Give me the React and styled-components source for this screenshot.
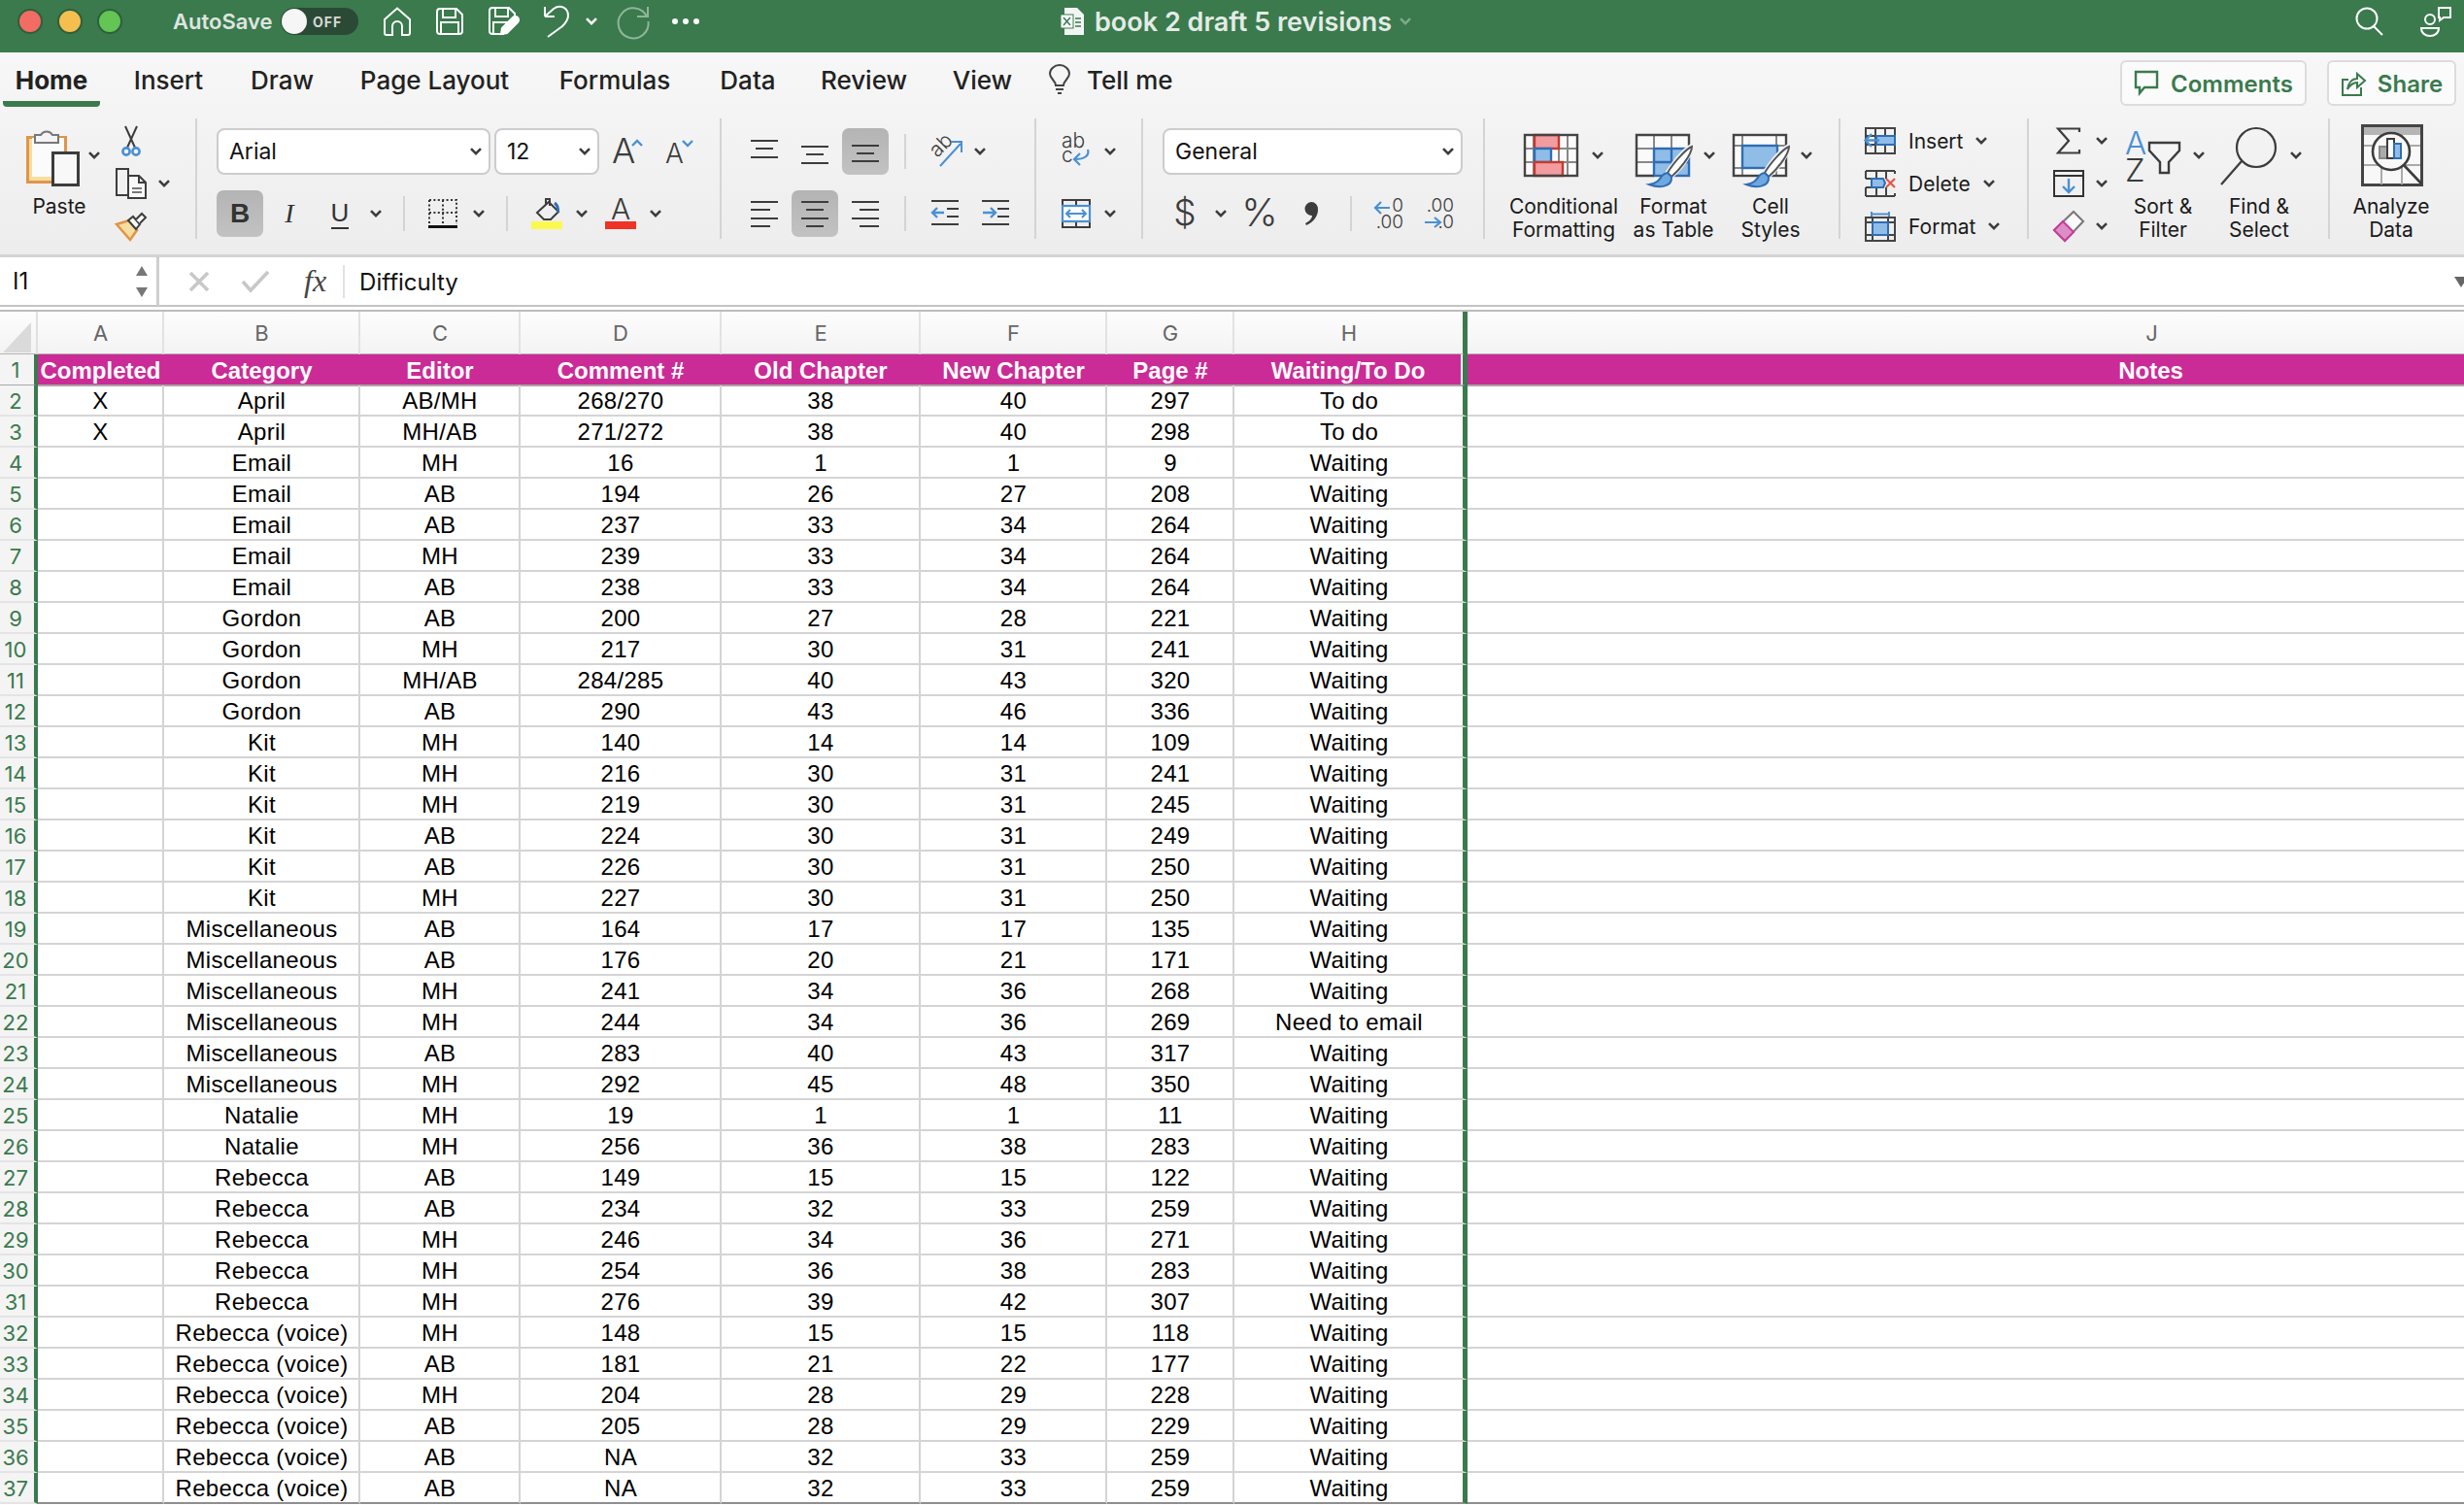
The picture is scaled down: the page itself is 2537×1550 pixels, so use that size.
import React from "react";
import styled, { createGlobalStyle } from "styled-components";

const COLUMNS = ["A", "B", "C", "D", "E", "F", "G", "H", "J"];
const HEADINGS = ["Completed", "Category", "Editor", "Comment #", "Old Chapter", "New Chapter", "Page #", "Waiting/To Do", "Notes"];

// one line per sheet row, starting at row 2
const SHEET = `X|April|AB/MH|268/270|38|40|297|To do
X|April|MH/AB|271/272|38|40|298|To do
|Email|MH|16|1|1|9|Waiting
|Email|AB|194|26|27|208|Waiting
|Email|AB|237|33|34|264|Waiting
|Email|MH|239|33|34|264|Waiting
|Email|AB|238|33|34|264|Waiting
|Gordon|AB|200|27|28|221|Waiting
|Gordon|MH|217|30|31|241|Waiting
|Gordon|MH/AB|284/285|40|43|320|Waiting
|Gordon|AB|290|43|46|336|Waiting
|Kit|MH|140|14|14|109|Waiting
|Kit|MH|216|30|31|241|Waiting
|Kit|MH|219|30|31|245|Waiting
|Kit|AB|224|30|31|249|Waiting
|Kit|AB|226|30|31|250|Waiting
|Kit|MH|227|30|31|250|Waiting
|Miscellaneous|AB|164|17|17|135|Waiting
|Miscellaneous|AB|176|20|21|171|Waiting
|Miscellaneous|MH|241|34|36|268|Waiting
|Miscellaneous|MH|244|34|36|269|Need to email
|Miscellaneous|AB|283|40|43|317|Waiting
|Miscellaneous|MH|292|45|48|350|Waiting
|Natalie|MH|19|1|1|11|Waiting
|Natalie|MH|256|36|38|283|Waiting
|Rebecca|AB|149|15|15|122|Waiting
|Rebecca|AB|234|32|33|259|Waiting
|Rebecca|MH|246|34|36|271|Waiting
|Rebecca|MH|254|36|38|283|Waiting
|Rebecca|MH|276|39|42|307|Waiting
|Rebecca (voice)|MH|148|15|15|118|Waiting
|Rebecca (voice)|AB|181|21|22|177|Waiting
|Rebecca (voice)|MH|204|28|29|228|Waiting
|Rebecca (voice)|AB|205|28|29|229|Waiting
|Rebecca (voice)|AB|NA|32|33|259|Waiting
|Rebecca (voice)|AB|NA|32|33|259|Waiting`
  .split("\n")
  .map((line) => line.split("|"));

const DARK = "#3c3c3c";
const BLUE = "#4a90d4";
const DEEP = "#2f6db5";
const PALE = "#90bde8";

const Chevron = ({ color = DARK }) => (
  <svg width="12" height="8" viewBox="0 0 12 8">
    <path d="M1 1.2 6 6.2 11 1.2" fill="none" stroke={color} strokeWidth="2.6" />
  </svg>
);

const Drop = ({ ml = 0, w = 20, color }) => (
  <Slot $w={w} $ml={ml}>
    <Chevron color={color} />
  </Slot>
);

const Home = () => (
  <svg width="28" height="30" viewBox="0 0 28 30" fill="none" stroke="#fff" strokeWidth="2">
    <path d="M1 13 14 1.5 27 13V27a2 2 0 0 1-2 2H19V20a5 5 0 0 0-10 0v9H3a2 2 0 0 1-2-2Z" />
  </svg>
);

const Save = () => (
  <svg width="28" height="28" viewBox="0 0 28 28" fill="none" stroke="#fff" strokeWidth="2">
    <path d="M4 1H21L27 7V24a3 3 0 0 1-3 3H4a3 3 0 0 1-3-3V4A3 3 0 0 1 4 1Z" />
    <path d="M7 1V10H20V1M5 27V15H23V27" />
  </svg>
);

const SaveAs = () => (
  <svg width="32" height="30" viewBox="0 0 32 30" fill="none" stroke="#fff" strokeWidth="2">
    <path d="M16 28H4a3 3 0 0 1-3-3V4A3 3 0 0 1 4 1H21L27 7V11" />
    <path d="M7 1V10H20V1M5 27V16H21" />
    <path d="M13 28 14 22 25 11a3 3 0 0 1 5 5L19 27Z" fill="#fff" />
  </svg>
);

const Undo = () => (
  <svg width="28" height="34" viewBox="0 0 28 34" fill="none" stroke="#fff" strokeWidth="2">
    <path d="M2 12V2M2 12H12M2 12 11 4C18-1 26 3 26 11 26 16 23 19 20 22L5 33" />
  </svg>
);

const Redo = () => (
  <svg width="34" height="34" viewBox="0 0 34 34" fill="none" stroke="#8fb59b" strokeWidth="2">
    <path d="M31 12A15.5 15.5 0 1 0 32.5 17M32 2V12H21" />
  </svg>
);

const DocBadge = () => (
  <svg width="26" height="30" viewBox="0 0 26 30">
    <path d="M5 1H18L25 8V29H5Z" fill="#f2f6f3" />
    <rect x="1" y="8" width="13" height="14" fill="#fff" stroke="#3a7a4d" />
    <path d="M4 11 11 19M11 11 4 19" stroke="#3a7a4d" strokeWidth="1.5" />
    <path d="M16 12h6M16 16h6M16 20h6" stroke="#3a7a4d" strokeWidth="1.5" />
  </svg>
);

const Search = () => (
  <svg width="30" height="30" viewBox="0 0 30 30" fill="none" stroke="#fff" strokeWidth="2">
    <circle cx="12" cy="12" r="10.5" />
    <path d="M19 20 28 29" />
  </svg>
);

const People = () => (
  <svg width="34" height="32" viewBox="0 0 34 32" fill="none" stroke="#fff" strokeWidth="2">
    <circle cx="11" cy="14" r="5" />
    <path d="M2 23H20C20 28 16 31 11 31S2 28 2 23Z" />
    <path d="M20 2H32V12H25L21 15V12H20Z" />
  </svg>
);

const Bulb = () => (
  <svg width="24" height="32" viewBox="0 0 24 32" fill="none" stroke="#444" strokeWidth="2">
    <path d="M8 22C8 17 2 15 2 10a10 9 0 0 1 20 0C22 15 16 17 16 22Z" />
    <path d="M8 26H16M10 30H14" />
  </svg>
);

const CommentIcon = () => (
  <svg width="26" height="28" viewBox="0 0 26 28" fill="none" stroke="#3a7a4d" strokeWidth="2.4">
    <path d="M2 2H24V18H11L6 24V18H2Z" />
  </svg>
);

const ShareIcon = () => (
  <svg width="26" height="28" viewBox="0 0 26 28" fill="none" stroke="#3a7a4d" strokeWidth="2">
    <path d="M8 10H2V26H21V18" />
    <path d="M7 20C8 13 12 9 17 9V4L25 11 17 18V13C13 13 10 15 7 20Z" />
  </svg>
);

const Paste = () => (
  <svg width="54" height="64" viewBox="0 0 54 64">
    <rect x="1.5" y="13.5" width="39" height="46" fill="#f7dd9f" stroke="#e0954a" strokeWidth="3" />
    <rect x="6" y="14" width="33" height="40" fill="#fbfbfb" />
    <path d="M9 19V11H15A7 7 0 0 1 27 11H33V19Z" fill="#f4f4f4" stroke="#777" strokeWidth="2" />
    <rect x="27.5" y="29.5" width="26" height="33" fill="#f8f8f8" stroke={DARK} strokeWidth="3" />
  </svg>
);

const Scissors = () => (
  <svg width="22" height="32" viewBox="0 0 22 32" fill="none">
    <path d="M5 1 15 23M17 1 7 23" stroke={DARK} strokeWidth="2" />
    <circle cx="6" cy="27" r="3.6" stroke={BLUE} strokeWidth="2.6" />
    <circle cx="16" cy="27" r="3.6" stroke={BLUE} strokeWidth="2.6" />
  </svg>
);

const Copy = () => (
  <svg width="32" height="32" viewBox="0 0 32 32" fill="none" stroke={DARK} strokeWidth="2">
    <path d="M13 7V1H8L1 1V28H12" />
    <path d="M13 8H24L31 15V31H13Z" fill="#f8f8f8" />
    <path d="M24 8V15H31" />
    <path d="M17 21H27M17 25H27" stroke="#777" />
  </svg>
);

const Painter = () => (
  <svg width="32" height="30" viewBox="0 0 32 30">
    <path d="M1 13 14 9 22 19 15 29Z" fill="#f7dd9f" stroke="#e0954a" strokeWidth="2.6" />
    <path d="M13 9 18 5 25 13 21 18Z" fill="#fafafa" stroke={DARK} strokeWidth="2" />
    <path d="M21 8 27 2 31 6 25 12" fill="#fafafa" stroke={DARK} strokeWidth="2" />
  </svg>
);

const Borders = () => (
  <svg width="30" height="30" viewBox="0 0 30 30" fill="none">
    <path d="M1 1H29V26M1 1V26M15 1V26M1 14H29" stroke="#333" strokeWidth="2" strokeDasharray="2 2.4" />
    <path d="M0 28.5H30" stroke="#111" strokeWidth="3" />
  </svg>
);

const FillColor = () => (
  <svg width="32" height="32" viewBox="0 0 32 32">
    <path d="M6 15 18 4 28 14 20 22H13Z" fill="none" stroke={DARK} strokeWidth="2" />
    <path d="M15 7V1H19V8" fill="none" stroke={DARK} strokeWidth="2" />
    <path d="M24 5C27 7 28 10 27.5 15" fill="none" stroke={DEEP} strokeWidth="3" />
    <rect y="24" width="32" height="8" fill="#fbf94f" />
  </svg>
);

const FontColor = () => (
  <svg width="32" height="32" viewBox="0 0 32 32">
    <text x="16" y="22" textAnchor="middle" fontSize="30" fontWeight="300" fontFamily="Inter" fill={DARK}>A</text>
    <rect y="24" width="32" height="8" fill="#ee3424" />
  </svg>
);

const GrowFont = () => (
  <svg width="32" height="30" viewBox="0 0 32 30" fill="none">
    <text x="0" y="27" fontSize="36" fontWeight="300" fontFamily="Inter" fill={DARK}>A</text>
    <path d="M21 9 26 4 31 9" stroke={BLUE} strokeWidth="2.4" />
  </svg>
);

const ShrinkFont = () => (
  <svg width="28" height="30" viewBox="0 0 28 30" fill="none">
    <text x="0" y="27" fontSize="28" fontWeight="300" fontFamily="Inter" fill={DARK}>A</text>
    <path d="M18 4 23 9 28 4" stroke={BLUE} strokeWidth="2.4" />
  </svg>
);

const Lines = ({ rows, width = 28 }) => (
  <svg width={width} height="30" viewBox={`0 0 ${width} 30`} fill="none" stroke={DARK} strokeWidth="2">
    <path d={rows.map(([x, w, y]) => `M${x} ${y}h${w}`).join("")} />
  </svg>
);

const Orientation = () => (
  <svg width="34" height="32" viewBox="0 0 34 32" fill="none">
    <text transform="translate(8 23) rotate(-45)" fontSize="21" fontFamily="Inter" fontWeight="300" fill={DARK}>ab</text>
    <path d="M11 31 32 8M22 6H33V17" stroke={BLUE} strokeWidth="2" />
  </svg>
);

const Wrap = () => (
  <svg width="30" height="32" viewBox="0 0 30 32" fill="none">
    <text x="0" y="12" fontSize="21" fontFamily="Inter" fontWeight="300" fill={DARK}>ab</text>
    <text x="0" y="27" fontSize="21" fontFamily="Inter" fontWeight="300" fill={DARK}>c</text>
    <path d="M27 14C29 20 24 24 14 24M19 18 13 24 19 30" stroke={BLUE} strokeWidth="2.2" />
  </svg>
);

const Merge = () => (
  <svg width="30" height="30" viewBox="0 0 30 30" fill="none">
    <path d="M1 1H29V29H1ZM15 1V7M15 23V29" stroke={DARK} strokeWidth="2" />
    <rect x="1" y="7" width="28" height="16" fill="#fbfbfb" stroke={BLUE} strokeWidth="2.2" />
    <path d="M5 15H25M9 11 5 15 9 19M21 11 25 15 21 19" stroke={BLUE} strokeWidth="2" />
  </svg>
);

const Indent = ({ flip }) => (
  <svg width="28" height="30" viewBox="0 0 28 30" fill="none">
    <path d="M0 2H28M16 10H28M16 18H28M0 26H28" stroke={DARK} strokeWidth="2" />
    <path d={flip ? "M1 14H13M9 9 14 14 9 19" : "M1 14H13M6 9 1 14 6 19"} stroke={BLUE} strokeWidth="2.4" />
  </svg>
);

const Dollar = () => (
  <svg width="20" height="34" viewBox="0 0 20 34">
    <text x="10" y="29" textAnchor="middle" fontSize="37" fontWeight="300" fontFamily="Inter" fill={DARK}>$</text>
  </svg>
);

const Percent = () => (
  <svg width="32" height="32" viewBox="0 0 32 32">
    <text x="16" y="29" textAnchor="middle" fontSize="40" fontWeight="300" fontFamily="Inter" fill={DARK}>%</text>
  </svg>
);

const Comma = () => (
  <svg width="16" height="26" viewBox="0 0 16 26">
    <path d="M8 1A7 7 0 0 1 15 9C15 16 10 22 3 25L2 23C6 21 9 18 9 15A7 7 0 1 1 8 1Z" fill={DARK} />
  </svg>
);

const Decimal = ({ more }) => (
  <svg width="32" height="32" viewBox="0 0 32 32" fill="none">
    <text x="31" y="14" textAnchor="end" fontSize="19" fontWeight="300" fontFamily="Inter" fill={DARK}>{more ? ".00" : "0"}</text>
    <text x="31" y="31" textAnchor="end" fontSize="19" fontWeight="300" fontFamily="Inter" fill={DARK}>{more ? ".0" : ".00"}</text>
    <path
      d={more ? "M1 25H16M11 20 17 25 11 30" : "M2 10H17M8 4 2 10 8 16"}
      stroke={BLUE}
      strokeWidth="2.2"
    />
  </svg>
);

const Brush = () => (
  <g>
    <path d="M58 20C50 22 36 40 30 50L36 57C46 50 60 32 60 22Z" fill="#f4f4f4" />
    <path d="M58 23C52 25 38 41 33 50L37 54C44 48 58 32 58 23Z" fill="#fff" stroke="#555" strokeWidth="2" />
    <path d="M33 50C24 51 28 60 14 62 24 66 38 65 37 54Z" fill="#6fa8e0" stroke={DEEP} strokeWidth="2" />
  </g>
);

const Conditional = () => (
  <svg width="56" height="64" viewBox="0 0 56 64" fill="none">
    <rect x="1" y="11" width="54" height="42" fill="#fafafa" />
    <path d="M10 11V53M27 11V53M36 11V53M45 11V53M1 25H55M1 39H55" stroke="#888" strokeWidth="2" />
    <rect x="11" y="11" width="25" height="14" fill="#f29ca0" stroke="#c43a2e" strokeWidth="2.4" />
    <rect x="11" y="25" width="17" height="14" fill={PALE} stroke={DEEP} strokeWidth="2.4" />
    <rect x="11" y="39" width="29" height="14" fill="#f29ca0" stroke="#c43a2e" strokeWidth="2.4" />
    <rect x="1" y="11" width="54" height="42" stroke="#444" strokeWidth="2.4" />
  </svg>
);

const TableStyle = () => (
  <svg width="60" height="64" viewBox="0 0 60 64" fill="none">
    <rect x="1" y="11" width="54" height="42" fill="#fafafa" />
    <path d="M19 11V53M37 11V53M1 25H55M1 39H55" stroke="#888" strokeWidth="2" />
    <rect x="19" y="25" width="36" height="28" fill={PALE} stroke={DEEP} strokeWidth="2.4" />
    <path d="M37 25V53M19 39H55" stroke={DEEP} strokeWidth="2.4" />
    <path d="M19 53H1V11H55V25" stroke="#444" strokeWidth="2.4" />
    <Brush />
  </svg>
);

const CellStyle = () => (
  <svg width="60" height="64" viewBox="0 0 60 64" fill="none">
    <rect x="1" y="11" width="54" height="42" fill="#fafafa" />
    <path d="M10 11V53M45 11V53M1 22H55M1 45H55" stroke="#888" strokeWidth="2" />
    <rect x="10" y="22" width="36" height="23" fill={PALE} stroke={DEEP} strokeWidth="2.4" />
    <rect x="1" y="11" width="54" height="42" stroke="#444" strokeWidth="2.4" />
    <Brush />
  </svg>
);

const InsertCells = () => (
  <svg width="32" height="28" viewBox="0 0 32 28" fill="none">
    <path d="M1 1H31V27H1ZM1 9H31M1 18H31M11 1V27M21 1V27" stroke="#444" strokeWidth="2" />
    <rect x="12" y="9" width="19" height="9" fill={PALE} stroke={DEEP} strokeWidth="2" />
    <path d="M1 13.5H15M7 7 0.5 13.5 7 20" stroke={BLUE} strokeWidth="2.4" />
  </svg>
);

const DeleteCells = () => (
  <svg width="32" height="28" viewBox="0 0 32 28" fill="none">
    <path d="M1 1H31M1 27H31M1 1V9M1 18V27M12 1V9M12 18V27M22 1V9M22 18V27M31 1V4M31 24V27M1 9H12M1 18H12" stroke="#444" strokeWidth="2" />
    <path d="M7 9H19L21 13.5 19 18H7Z" fill={PALE} stroke={DEEP} strokeWidth="2" />
    <path d="M22 9 31 18M31 9 22 18" stroke="#e4574a" strokeWidth="2.2" />
  </svg>
);

const FormatCells = () => (
  <svg width="32" height="32" viewBox="0 0 32 32" fill="none">
    <path d="M7 1V6M25 1V6M7 3.5H25" stroke={BLUE} strokeWidth="2" />
    <path d="M1 7H31V31H1ZM8 7V31M24 7V31M1 12H31M1 25H31" stroke="#444" strokeWidth="2" />
    <rect x="8" y="12" width="16" height="13" fill={PALE} stroke={DEEP} strokeWidth="2" />
  </svg>
);

const Sigma = () => (
  <svg width="26" height="28" viewBox="0 0 26 28" fill="none" stroke={DARK} strokeWidth="2.2">
    <path d="M24 5V1.5H2L13 14 2 26.5H24V23" />
  </svg>
);

const FillDown = () => (
  <svg width="32" height="28" viewBox="0 0 32 28" fill="none">
    <rect x="1" y="1" width="30" height="26" stroke="#333" strokeWidth="2" />
    <path d="M1 6H31" stroke="#333" strokeWidth="2" />
    <path d="M16 9V23M10 17 16 23 22 17" stroke={BLUE} strokeWidth="2.4" />
  </svg>
);

const Eraser = () => (
  <svg width="32" height="32" viewBox="0 0 32 32" fill="none">
    <path d="M21 1 31 11 12 31 1 20Z" fill="#fafafa" stroke="#777" strokeWidth="2" />
    <path d="M10 11 21 22 12 31 1 20Z" fill="#dc8fc4" stroke="#c93a9c" strokeWidth="2" />
  </svg>
);

const SortFilter = () => (
  <svg width="58" height="64" viewBox="0 0 58 64" fill="none">
    <text x="0" y="31" fontSize="33" fontWeight="300" fontFamily="Inter" fill={BLUE}>A</text>
    <text x="0" y="59" fontSize="33" fontWeight="300" fontFamily="Inter" fill={DARK}>Z</text>
    <path d="M25 19H56V27L45 39V50H36V39L25 27Z" fill="#f4f4f4" stroke={DARK} strokeWidth="2.4" />
  </svg>
);

const FindSelect = () => (
  <svg width="62" height="64" viewBox="0 0 62 64" fill="none" stroke={DARK} strokeWidth="2.2">
    <circle cx="37" cy="24" r="20" />
    <path d="M22 38 1 62" />
  </svg>
);

const Analyze = () => (
  <svg width="64" height="64" viewBox="0 0 64 64" fill="none">
    <rect x="1.5" y="1.5" width="61" height="61" fill="#f8f8f8" stroke="#444" strokeWidth="3" />
    <rect x="3" y="3" width="58" height="8" fill="#b5b5b5" />
    <path d="M3 22H61M3 42H61M21 11V62M42 11V62" stroke="#aaa" strokeWidth="2" />
    <circle cx="31" cy="28" r="19" fill="#f8f8f8" stroke={DARK} strokeWidth="2.6" />
    <rect x="19" y="23" width="9" height="12" fill="#aaa" stroke="#888" strokeWidth="2" />
    <rect x="27" y="15" width="7" height="20" fill="#fff" stroke={DARK} strokeWidth="2" />
    <rect x="34" y="20" width="7" height="15" fill={PALE} stroke={DEEP} strokeWidth="2" />
    <path d="M44 42 62 61" stroke={DARK} strokeWidth="2.6" />
  </svg>
);

const Cancel = () => (
  <svg width="22" height="22" viewBox="0 0 22 22" fill="none" stroke="#c8c8c8" strokeWidth="3.6">
    <path d="M2 2 20 20M20 2 2 20" />
  </svg>
);

const Confirm = () => (
  <svg width="30" height="24" viewBox="0 0 30 24" fill="none" stroke="#c8c8c8" strokeWidth="3.6">
    <path d="M2 12 10 21 28 2" />
  </svg>
);

const Corner = () => (
  <svg width="30" height="32" viewBox="0 0 30 32">
    <path d="M29 0V31H0Z" fill="#dadada" />
  </svg>
);

const LabelTool = ({ w, pad, label, icon, ml = 0, drop = 10 }) => (
  <BigTool $w={w} $ml={ml}>
    <IconRow $pad={pad}>
      {icon}
      {drop !== null && <Drop ml={drop} />}
    </IconRow>
    <ToolLabel>{label}</ToolLabel>
  </BigTool>
);

const FontRows = () => (
  <Group $w={540} $pad={20} $top={10}>
    <ToolRow>
      <Select $w={282}>
        <span>Arial</span>
        <Chevron />
      </Select>
      <Select $w={108} $ml={4}>
        <span>12</span>
        <Chevron />
      </Select>
      <Slot $w={32} $ml={13}><GrowFont /></Slot>
      <Slot $w={28} $ml={23}><ShrinkFont /></Slot>
    </ToolRow>
    <ToolRow $gap={16}>
      <Slot $w={48} $on><BoldMark>B</BoldMark></Slot>
      <Slot $w={48} $ml={3}><ItalicMark>I</ItalicMark></Slot>
      <Slot $w={48} $ml={4}><UnderMark>U</UnderMark></Slot>
      <Drop ml={3} />
      <Rule $ml={18} />
      <Slot $w={30} $ml={24}><Borders /></Slot>
      <Drop ml={12} />
      <Rule $ml={18} />
      <Slot $w={32} $ml={24}><FillColor /></Slot>
      <Drop ml={10} />
      <Slot $w={32} $ml={14}><FontColor /></Slot>
      <Drop ml={10} />
    </ToolRow>
  </Group>
);

const AlignRows = () => (
  <Group $w={324} $pad={20} $top={10}>
    <ToolRow>
      <Slot $w={48}><Lines rows={[[0, 28, 4], [5, 18, 12], [0, 28, 21]]} /></Slot>
      <Slot $w={48} $ml={4}><Lines rows={[[0, 28, 10], [5, 18, 18], [0, 28, 27]]} /></Slot>
      <Slot $w={48} $ml={4} $on><Lines rows={[[0, 28, 9], [5, 18, 17], [0, 28, 25]]} /></Slot>
      <Rule $ml={16} />
      <Slot $w={34} $ml={24}><Orientation /></Slot>
      <Drop ml={8} />
    </ToolRow>
    <ToolRow $gap={16}>
      <Slot $w={48}><Lines rows={[[0, 28, 3], [0, 20, 11], [0, 28, 20], [0, 20, 28]]} /></Slot>
      <Slot $w={48} $ml={4} $on><Lines rows={[[0, 28, 3], [5, 18, 11], [0, 28, 20], [5, 18, 28]]} /></Slot>
      <Slot $w={48} $ml={4}><Lines rows={[[0, 28, 3], [8, 20, 11], [0, 28, 20], [8, 20, 28]]} /></Slot>
      <Rule $ml={16} />
      <Slot $w={28} $ml={26}><Indent /></Slot>
      <Slot $w={28} $ml={24}><Indent flip /></Slot>
    </ToolRow>
  </Group>
);

const WrapRows = () => (
  <Group $w={110} $pad={24} $top={10}>
    <ToolRow>
      <Slot $w={34}><Wrap /></Slot>
      <Drop ml={8} />
    </ToolRow>
    <ToolRow $gap={16}>
      <Slot $w={34}><Merge /></Slot>
      <Drop ml={8} />
    </ToolRow>
  </Group>
);

const NumberRows = () => (
  <Group $w={352} $pad={20} $top={10}>
    <ToolRow>
      <Select $w={309}>
        <span>General</span>
        <Chevron />
      </Select>
    </ToolRow>
    <ToolRow $gap={16}>
      <Slot $w={20} $ml={13}><Dollar /></Slot>
      <Drop ml={17} />
      <Slot $w={32} $ml={14}><Percent /></Slot>
      <Slot $w={20} $ml={27}><Comma /></Slot>
      <Rule $ml={30} />
      <Slot $w={32} $ml={22}><Decimal /></Slot>
      <Slot $w={32} $ml={20}><Decimal more /></Slot>
    </ToolRow>
  </Group>
);

export default function App() {
  return (
    <Page>
      <GlobalStyle />
      <TitleBar>
        <Lights>
          <Light $c="#f26c63" />
          <Light $c="#f5bf4f" />
          <Light $c="#62c554" />
        </Lights>
        <AutoSave>AutoSave</AutoSave>
        <Toggle>
          <Knob />
          <ToggleText>OFF</ToggleText>
        </Toggle>
        <Slot $w={28} $ml={26}><Home /></Slot>
        <Slot $w={28} $ml={26}><Save /></Slot>
        <Slot $w={32} $ml={26}><SaveAs /></Slot>
        <Slot $w={28} $ml={24}><Undo /></Slot>
        <Drop ml={12} color="#fff" />
        <Slot $w={34} $ml={16}><Redo /></Slot>
        <Dots $ml={23}>
          <i />
          <i />
          <i />
        </Dots>
        <Slot $w={26} $ml={371}><DocBadge /></Slot>
        <DocTitle>book 2 draft 5 revisions</DocTitle>
        <Drop ml={4} color="#7fa98b" />
        <BarEnd>
          <Search />
          <People />
        </BarEnd>
      </TitleBar>

      <Ribbon>
        <TabBar>
          <Tab $w={100} $active>Home</Tab>
          <Tab $w={141}>Insert</Tab>
          <Tab $w={93}>Draw</Tab>
          <Tab $w={221}>Page Layout</Tab>
          <Tab $w={150}>Formulas</Tab>
          <Tab $w={124}>Data</Tab>
          <Tab $w={115}>Review</Tab>
          <Tab $w={129}>View</Tab>
          <TellMe>
            <Bulb />
            Tell me
          </TellMe>
          <TabActions>
            <OutlineButton $w={192}>
              <CommentIcon />
              <ButtonText>Comments</ButtonText>
            </OutlineButton>
            <OutlineButton $w={133}>
              <ShareIcon />
              <ButtonText>Share</ButtonText>
            </OutlineButton>
          </TabActions>
        </TabBar>
        <Tools>
          <Group $w={203}>
            <LabelTool w={122} pad={27} label="Paste" icon={<Paste />} drop={6} />
            <Stack $ml={-3}>
              <StackRow><Slot $w={32}><Scissors /></Slot></StackRow>
              <StackRow><Slot $w={32}><Copy /></Slot><Drop ml={8} /></StackRow>
              <StackRow><Slot $w={32}><Painter /></Slot></StackRow>
            </Stack>
          </Group>
          <FontRows />
          <AlignRows />
          <WrapRows />
          <NumberRows />
          <Group $w={366} $pad={24}>
            <LabelTool w={114} pad={16} icon={<Conditional />} label={<>Conditional<br />Formatting</>} />
            <LabelTool w={112} pad={17} drop={6} icon={<TableStyle />} label={<>Format<br />as Table</>} />
            <LabelTool w={88} pad={5} drop={6} icon={<CellStyle />} label={<>Cell<br />Styles</>} />
          </Group>
          <Group $w={194} $pad={25}>
            <Stack>
              <StackRow><InsertCells /><CellLabel>Insert</CellLabel><Drop ml={9} /></StackRow>
              <StackRow><DeleteCells /><CellLabel>Delete</CellLabel><Drop ml={9} /></StackRow>
              <StackRow><FormatCells /><CellLabel>Format</CellLabel><Drop ml={9} /></StackRow>
            </Stack>
          </Group>
          <Group $w={310} $pad={25}>
            <Stack>
              <StackRow><Slot $w={32}><Sigma /></Slot><Drop ml={8} /></StackRow>
              <StackRow><Slot $w={32}><FillDown /></Slot><Drop ml={8} /></StackRow>
              <StackRow><Slot $w={32}><Eraser /></Slot><Drop ml={8} /></StackRow>
            </Stack>
            <LabelTool ml={6} w={94} pad={8} drop={8} icon={<SortFilter />} label={<>Sort &amp;<br />Filter</>} />
            <LabelTool ml={4} w={96} pad={8} drop={6} icon={<FindSelect />} label={<>Find &amp;<br />Select</>} />
          </Group>
          <Group $w={138} $last>
            <LabelTool w={126} pad={32} drop={null} icon={<Analyze />} label={<>Analyze<br />Data</>} />
          </Group>
        </Tools>
      </Ribbon>

      <FormulaBar>
        <NameBox>
          <span>I1</span>
          <Spinner>
            <Tri />
            <Tri $down />
          </Spinner>
        </NameBox>
        <Slot $w={22} $ml={30}><Cancel /></Slot>
        <Slot $w={30} $ml={32}><Confirm /></Slot>
        <FxMark>fx</FxMark>
        <FxRule />
        <FormulaText>Difficulty</FormulaText>
        <ExpandTri />
      </FormulaBar>

      <Sheet>
        <ColumnRow>
          <CornerCell><Corner /></CornerCell>
          {COLUMNS.map((c, i) => (
            <ColumnCell key={c} $last={i === 8}>{c}</ColumnCell>
          ))}
        </ColumnRow>
        <TitleRow>
          <RowNumber>1</RowNumber>
          {HEADINGS.map((h, i) => (
            <TitleCell key={h} $gap={i === 7}>{h}</TitleCell>
          ))}
        </TitleRow>
        {SHEET.map((cells, r) => (
          <DataRow key={r}>
            <RowNumber>{r + 2}</RowNumber>
            {cells.map((v, i) => (
              <Cell key={i} $gap={i === 7}>{v}</Cell>
            ))}
            <Cell $end />
          </DataRow>
        ))}
      </Sheet>
    </Page>
  );
}

const GlobalStyle = createGlobalStyle`
  html, body {
    margin: 0;
    height: 100%;
    overflow: hidden;
    background: #fff;
  }
  * {
    box-sizing: border-box;
  }
  svg {
    display: block;
    flex: none;
    overflow: visible;
  }
`;

const Page = styled.div`
  width: 2537px;
  height: 1550px;
  overflow: hidden;
  font-family: Inter, "Liberation Sans", sans-serif;
  color: #111;
`;

const Slot = styled.span`
  display: inline-flex;
  flex: none;
  align-items: center;
  justify-content: center;
  width: ${(p) => p.$w}px;
  height: ${(p) => (p.$on ? "48px" : "auto")};
  margin-left: ${(p) => p.$ml || 0}px;
  border-radius: 7px;
  background: ${(p) => (p.$on ? "linear-gradient(#b4b4b4, #c2c2c2)" : "none")};
`;

const TitleBar = styled.header`
  display: flex;
  align-items: center;
  height: 54px;
  padding-bottom: 10px;
  background: #3a7a4d;
`;

const Lights = styled.div`
  display: flex;
  gap: 15px;
  margin-left: 18px;
`;

const Light = styled.span`
  width: 26px;
  height: 26px;
  border-radius: 50%;
  background: ${(p) => p.$c};
  border: 2px solid #2f5f3e;
`;

const AutoSave = styled.span`
  flex: none;
  width: 101px;
  margin-left: 52px;
  white-space: nowrap;
  font-size: 22px;
  font-weight: 600;
  color: #dfe5e0;
`;

const Toggle = styled.span`
  display: flex;
  align-items: center;
  flex: none;
  width: 80px;
  height: 28px;
  margin-left: 10px;
  border-radius: 14px;
  background: #2b4a36;
`;

const Knob = styled.span`
  width: 26px;
  height: 26px;
  margin-left: 1px;
  border-radius: 50%;
  background: #f6f6f6;
`;

const ToggleText = styled.span`
  margin-left: 6px;
  font-size: 14px;
  font-weight: 700;
  letter-spacing: 1px;
  color: #d8d8d8;
`;

const Dots = styled.span`
  display: flex;
  gap: 5px;
  margin-left: ${(p) => p.$ml}px;
  i {
    width: 6px;
    height: 6px;
    border-radius: 50%;
    background: #fff;
  }
`;

const DocTitle = styled.span`
  margin-left: 10px;
  white-space: nowrap;
  font-size: 27px;
  font-weight: 600;
  color: #e4ebe6;
`;

const BarEnd = styled.div`
  display: flex;
  align-items: center;
  gap: 36px;
  margin-left: auto;
  padding-right: 12px;
`;

const Ribbon = styled.section`
  height: 211px;
  background: linear-gradient(#f7f7f7, #ededed);
  border-bottom: 3px solid #d4d4d4;
`;

const TabBar = styled.nav`
  display: flex;
  align-items: flex-start;
  height: 68px;
  padding-left: 3px;
`;

const Tab = styled.span`
  display: flex;
  align-items: center;
  justify-content: center;
  flex: none;
  width: ${(p) => p.$w}px;
  height: 56px;
  padding-top: 6px;
  font-size: 26px;
  font-weight: ${(p) => (p.$active ? 700 : 500)};
  color: #222;
  border-bottom: 6px solid ${(p) => (p.$active ? "#3a7a4d" : "transparent")};
  border-radius: 0 0 4px 4px;
`;

const TellMe = styled(Tab)`
  width: auto;
  gap: 16px;
  margin-left: 3px;
`;

const TabActions = styled.div`
  display: flex;
  gap: 21px;
  margin-left: auto;
  margin-top: 8px;
  padding-right: 8px;
`;

const OutlineButton = styled.span`
  display: flex;
  align-items: center;
  justify-content: center;
  gap: 12px;
  width: ${(p) => p.$w}px;
  height: 47px;
  border: 2px solid #dcdcdc;
  border-radius: 6px;
  background: #fbfbfb;
  font-size: 24px;
  font-weight: 600;
  color: #3a7a4d;
`;

const ButtonText = styled.span`
  padding-top: 2px;
`;

const Tools = styled.div`
  display: flex;
`;

const Group = styled.div`
  display: ${(p) => (p.$top ? "block" : "flex")};
  flex: none;
  width: ${(p) => p.$w}px;
  height: 124px;
  padding-left: ${(p) => p.$pad || 0}px;
  padding-top: ${(p) => p.$top || 0}px;
  border-right: ${(p) => (p.$last ? "none" : "2px solid #d4d4d4")};
`;

const ToolRow = styled.div`
  display: flex;
  align-items: center;
  height: 48px;
  margin-top: ${(p) => p.$gap || 0}px;
`;

const BigTool = styled.div`
  display: flex;
  flex-direction: column;
  flex: none;
  width: ${(p) => p.$w}px;
  margin-left: ${(p) => p.$ml}px;
`;

const IconRow = styled.div`
  display: flex;
  align-items: center;
  flex: none;
  height: 76px;
  padding-left: ${(p) => p.$pad}px;
`;

const ToolLabel = styled.div`
  flex: none;
  margin-top: 3px;
  text-align: center;
  white-space: nowrap;
  font-size: 21px;
  line-height: 24px;
  color: #1a1a1a;
`;

const Stack = styled.div`
  display: flex;
  flex-direction: column;
  flex: none;
  padding-top: 1px;
  margin-left: ${(p) => p.$ml || 0}px;
`;

const StackRow = styled.div`
  display: flex;
  align-items: center;
  flex: none;
  height: 44px;
`;

const CellLabel = styled.span`
  margin-left: 13px;
  font-size: 21px;
  color: #1a1a1a;
`;

const Select = styled.div`
  display: flex;
  align-items: center;
  justify-content: space-between;
  flex: none;
  width: ${(p) => p.$w}px;
  height: 48px;
  margin-left: ${(p) => p.$ml || 0}px;
  padding: 0 7px 0 11px;
  border: 2px solid #cccccc;
  border-radius: 8px;
  background: #fff;
  font-size: 23px;
  color: #111;
`;

const Rule = styled.span`
  flex: none;
  width: 2px;
  height: 36px;
  margin-left: ${(p) => p.$ml}px;
  background: #d4d4d4;
`;

const BoldMark = styled.span`
  font: 700 28px "Liberation Sans", sans-serif;
  color: #333;
`;

const ItalicMark = styled.span`
  font: italic 400 28px "Liberation Serif", serif;
  color: #333;
`;

const UnderMark = styled.span`
  font: 400 26px "Liberation Sans", sans-serif;
  color: #333;
  padding-bottom: 1px;
  border-bottom: 2px solid #333;
  line-height: 28px;
`;

const FormulaBar = styled.div`
  display: flex;
  align-items: center;
  position: relative;
  height: 56px;
  padding-bottom: 5px;
  background: #fff;
  border-bottom: 2px solid #bdbdbd;
  box-shadow: inset 0 -3px 0 #fff, inset 0 -5px 0 #c4c4c4;
`;

const NameBox = styled.div`
  display: flex;
  align-items: center;
  justify-content: space-between;
  flex: none;
  width: 164px;
  height: 51px;
  padding: 0 9px 0 13px;
  border-right: 3px solid #cfcfcf;
  font-size: 24px;
`;

const Spinner = styled.span`
  display: flex;
  flex-direction: column;
  gap: 12px;
`;

const Tri = styled.i`
  width: 0;
  height: 0;
  border-left: 6px solid transparent;
  border-right: 6px solid transparent;
  ${(p) => (p.$down ? "border-top" : "border-bottom")}: 10px solid #777;
`;

const FxMark = styled.span`
  margin-left: 35px;
  font: italic 400 32px "Liberation Serif", serif;
  color: #444;
`;

const FxRule = styled.span`
  width: 2px;
  height: 34px;
  margin-left: 17px;
  background: #e2e2e2;
`;

const FormulaText = styled.span`
  margin-left: 15px;
  padding-top: 2px;
  font-size: 24px;
  color: #111;
`;

const ExpandTri = styled.i`
  position: absolute;
  right: -4px;
  top: 20px;
  border-left: 7px solid transparent;
  border-right: 7px solid transparent;
  border-top: 11px solid #666;
`;

const Sheet = styled.main`
  font-family: "Liberation Sans", Arial, sans-serif;
  font-size: 24px;
  color: #000;
`;

const COLS = "39px 130px 202px 165px 207px 205px 192px 131px 240px 1408px";

const SheetRow = styled.div`
  display: grid;
  grid-template-columns: ${COLS};
  height: 32px;
  width: 2919px;
`;

const ColumnRow = styled(SheetRow)`
  height: 44px;
  background: linear-gradient(#fdfdfd, #f3f3f3);
`;

const CornerCell = styled.div`
  padding: 11px 0 0 3px;
  border-right: 2px solid #e0e0e0;
  border-bottom: 3px solid #b4b4b4;
`;

const ColumnCell = styled.div`
  display: flex;
  align-items: center;
  justify-content: center;
  padding: 0 0 0 1px;
  font: 400 22px Inter, sans-serif;
  color: #666;
  border-bottom: 3px solid #b4b4b4;
  border-right: ${(p) => (p.$last ? "none" : "2px solid #e2e2e2")};
  &:nth-child(9) {
    border-right: 5px solid #3a7a4d;
  }
`;

const RowNumber = styled.div`
  display: flex;
  align-items: center;
  justify-content: center;
  padding: 1px 3px 0 0;
  font: 400 22px Inter, sans-serif;
  color: #3a7a4d;
  background: #f4f4f4;
  border-right: 4px solid #3a7a4d;
  border-bottom: 2px solid #e4e4e4;
`;

const TitleRow = styled(SheetRow)`
  ${RowNumber} {
    border-bottom: 2px solid #a8a8a8;
  }
`;

const TitleCell = styled.div`
  display: flex;
  align-items: center;
  justify-content: center;
  padding: 3px 1px 0 0;
  white-space: nowrap;
  font-weight: 700;
  color: #fff;
  background: #cb2b96;
  border-bottom: 2px solid #a8a8a8;
  ${(p) => p.$gap && "border-right: 5px solid #3a7a4d; box-shadow: inset -2px 0 0 #fff;"}
`;

const Cell = styled.div`
  display: flex;
  align-items: center;
  justify-content: center;
  padding: 2px 0 0 1px;
  white-space: nowrap;
  letter-spacing: 0.3px;
  border-bottom: 2px solid #d4d4d4;
  border-right: ${(p) => (p.$gap ? "5px solid #3a7a4d" : p.$end ? "none" : "2px solid #d4d4d4")};
`;

const DataRow = styled(SheetRow)`
  &:last-child ${Cell} {
    border-bottom-color: #8e8e8e;
  }
`;
